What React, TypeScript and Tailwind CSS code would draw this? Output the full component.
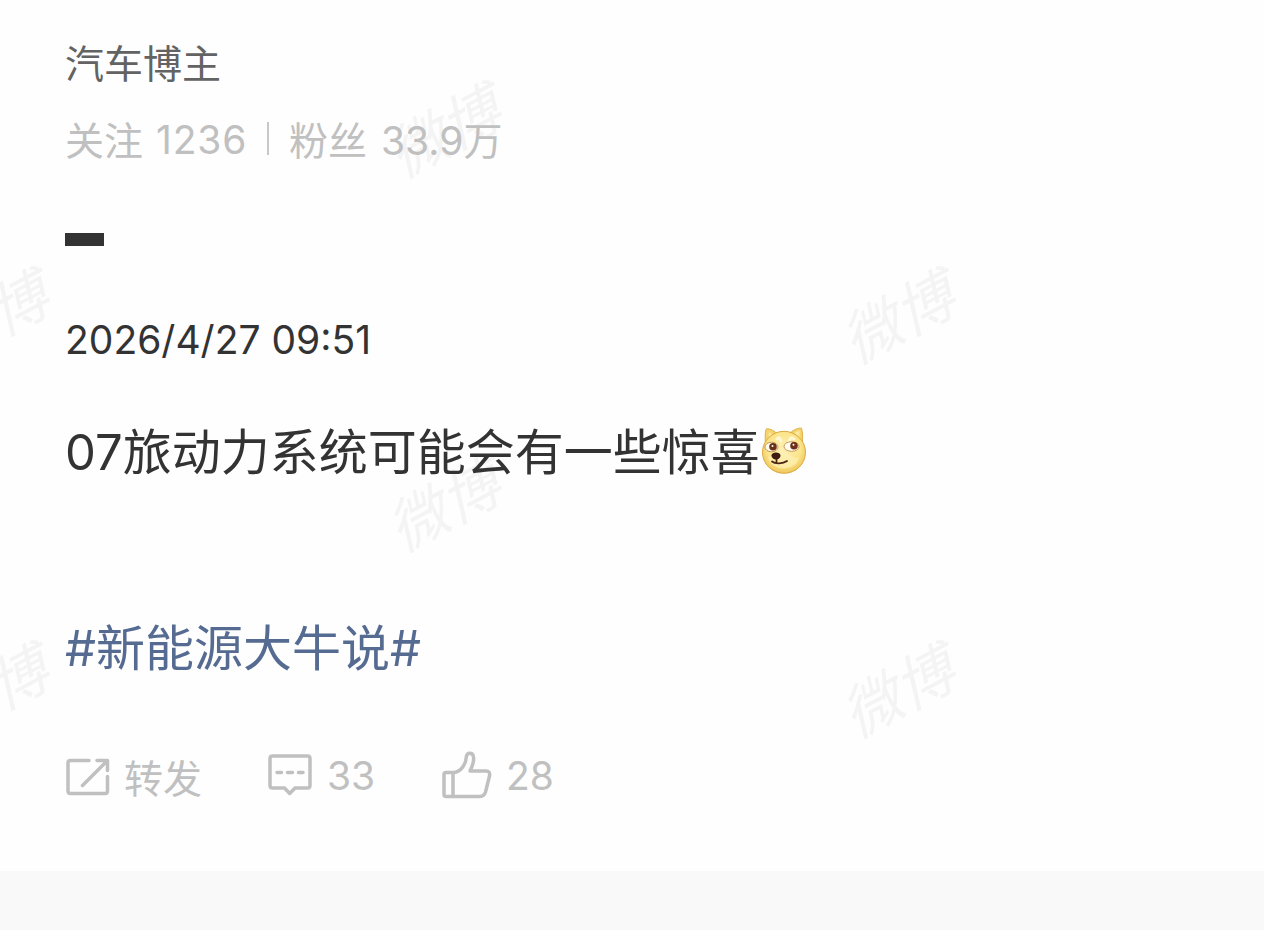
const watermarks = [
  { x: 449, y: 130 },
  { x: -3, y: 316 },
  { x: 903, y: 316 },
  { x: 449, y: 504 },
  { x: -3, y: 690 },
  { x: 903, y: 690 },
]

const Watermark = () => (
  <svg className="absolute inset-0 h-full w-full pointer-events-none" viewBox="0 0 1264 930" aria-hidden="true">
    {watermarks.map((mark, index) => (
      <text
        key={index}
        transform={`translate(${mark.x} ${mark.y}) rotate(-28) skewX(-15)`}
        textAnchor="middle"
        y="21"
        fontSize="59"
        className="fill-[#f4f4f4] font-['Noto_Sans_CJK_SC',sans-serif]"
      >
        微博
      </text>
    ))}
  </svg>
)

const DogeEmoji = () => (
  <svg width="46" height="48" viewBox="0 0 46 48" className="ml-[1px] shrink-0">
    <defs>
      <radialGradient id="face" cx="50%" cy="42%" r="60%">
        <stop offset="0" stopColor="#fdf0b4" />
        <stop offset="0.65" stopColor="#fbe48a" />
        <stop offset="1" stopColor="#edc353" />
      </radialGradient>
    </defs>
    <path d="M4.500 19C4 10 4 4 5.500 1.800C9 1.500 14 4 17 8Z" fill="#f6d36c" stroke="#dfb047" strokeWidth="1" />
    <path d="M29 6C33 2.500 37 .8 40.500 1.200C41.500 5 42 10 41 18Z" fill="#f6d36c" stroke="#dfb047" strokeWidth="1" />
    <path d="M7.500 11L8 5L13 8ZM33 6L38.500 3.500L38.500 11Z" fill="#fbeaa2" />
    <ellipse cx="23" cy="25.300" rx="21.500" ry="21" fill="url(#face)" stroke="#dba940" strokeWidth="1" />
    <path d="M7 30C9 44 34 46 38 31C31 31 25 26 21 22C17 26 12 29 7 30Z" fill="#fff1bb" opacity="0.6" />
    <path d="M16 12Q19 9 20 14M28 14Q30 9 33 12" fill="none" stroke="#fff7d4" strokeWidth="3" strokeLinecap="round" />
    <ellipse cx="10.500" cy="20" rx="6.500" ry="4.800" fill="#fffdf2" stroke="#b98238" strokeWidth="0.8" />
    <ellipse cx="30.500" cy="19.500" rx="7.500" ry="4.800" fill="#fffdf2" stroke="#b98238" strokeWidth="0.8" />
    <circle cx="12" cy="19.800" r="3.800" fill="#6b3015" />
    <circle cx="33" cy="18.800" r="3.800" fill="#6b3015" />
    <circle cx="11.500" cy="19" r="1" fill="#fff" />
    <circle cx="32.500" cy="17.800" r="1" fill="#fff" />
    <path d="M10.500 28.500C10.500 24.500 19.500 24.500 19.500 28.500C19.500 31 17 32.500 15 32.500S10.500 31 10.500 28.500Z" fill="#3d1b10" />
    <path d="M15.500 32.500V35M11 34.500C14 37 22 37 26 34" fill="none" stroke="#4a2313" strokeWidth="1.800" strokeLinecap="round" />
  </svg>
)

const RepostIcon = () => (
  <svg width="44" height="38" viewBox="0 0 44 38" fill="none" stroke="#c0c0c0" strokeWidth="3.500" strokeLinecap="round" strokeLinejoin="round">
    <path d="M23 2.500H4.500Q2 2.500 2 5V33Q2 35.500 4.500 35.500H39Q41.500 35.500 41.500 33V18.500" />
    <path d="M16.500 27.500L41 3M31 2.500H41.500V12.500" />
  </svg>
)

const CommentIcon = () => (
  <svg width="44" height="42" viewBox="0 0 44 42" fill="none" stroke="#c0c0c0" strokeWidth="3.500" strokeLinecap="round" strokeLinejoin="round">
    <path d="M4.500 2H39.500Q42 2 42 4.500V31.500Q42 34 39.500 34H27L21.700 39.500L16.500 34H4.500Q2 34 2 31.500V4.500Q2 2 4.500 2Z" />
    <path d="M9 18.500H13.500M19.500 18.500H24.500M30.500 18.500H35" />
  </svg>
)

const LikeIcon = () => (
  <svg width="50" height="48" viewBox="0 0 50 48" fill="none" stroke="#c0c0c0" strokeWidth="3.500" strokeLinecap="round" strokeLinejoin="round">
    <path d="M11 21.500H4Q2 21.500 2 23.500V43.500Q2 45.500 4 45.500H38Q42 45.500 43.500 41L47.500 25Q48.500 20 44 20H28C31 14 32 9 31.500 6C30.800 .8 24.800 1 24.300 6C23.800 13 19 21.500 11 21.500ZM11 21.500V45.500" />
  </svg>
)

const App = () => {
  return (
    <div className="relative h-[930px] w-[1264px] overflow-hidden bg-[#fefefe] font-[Inter,'Noto_Sans_CJK_SC',sans-serif]">
      <Watermark />
      <main className="relative flex h-[871px] flex-col items-start pl-[65px]">
        <h1 className="mt-[35px] h-[58px] text-[39px] leading-[58px] text-[#636363]">汽车博主</h1>
        <div className="mt-[18px] flex h-[58px] items-center text-[39px] leading-[58px] text-[#c0c0c0]">
          <span className="pt-[2px]">关注</span>
          <span className="ml-[13px] w-[92px] whitespace-nowrap tracking-[0.8px]">1236</span>
          <span className="ml-[19px] mr-[20px] mb-[3px] h-[33px] w-[2px] bg-[#c8c8c8]" />
          <span className="pt-[2px]">粉丝</span>
          <span className="ml-[14px] pt-[2px]">33.9万</span>
        </div>
        <div className="mt-[64px] h-[13px] w-[39px] bg-[#333]" />
        <time className="mt-[65px] h-[58px] text-[39px] leading-[58px] text-[#333]">2026/4/27 09:51</time>
        <p className="mt-[46px] flex h-[72px] items-center text-[49px] leading-[72px] text-[#333]">
          <span className="pt-[4px]">07旅动力系统可能会有一些惊喜</span>
          <DogeEmoji />
        </p>
        <a href="#" className="mt-[126px] h-[72px] text-[49px] leading-[72px] text-[#566b91]">#新能源大牛说#</a>
        <div className="mt-[59px] flex h-[58px] items-center text-[39px] leading-[58px] text-[#c0c0c0]">
          <button className="flex w-[202px] items-center gap-[14px] pl-[1px] pt-[7px]"><RepostIcon /><span className="pt-[4px]">转发</span></button>
          <button className="flex w-[174px] items-center gap-[15px] pt-[3px] pl-[1px]"><CommentIcon /><span className="pt-[3px]">33</span></button>
          <button className="flex items-center gap-[14px] pt-[3px] pl-[1px]"><LikeIcon /><span className="pt-[3px]">28</span></button>
        </div>
      </main>
      <footer className="h-[59px] bg-[#f9f9f9]" />
    </div>
  )
}
export default App
